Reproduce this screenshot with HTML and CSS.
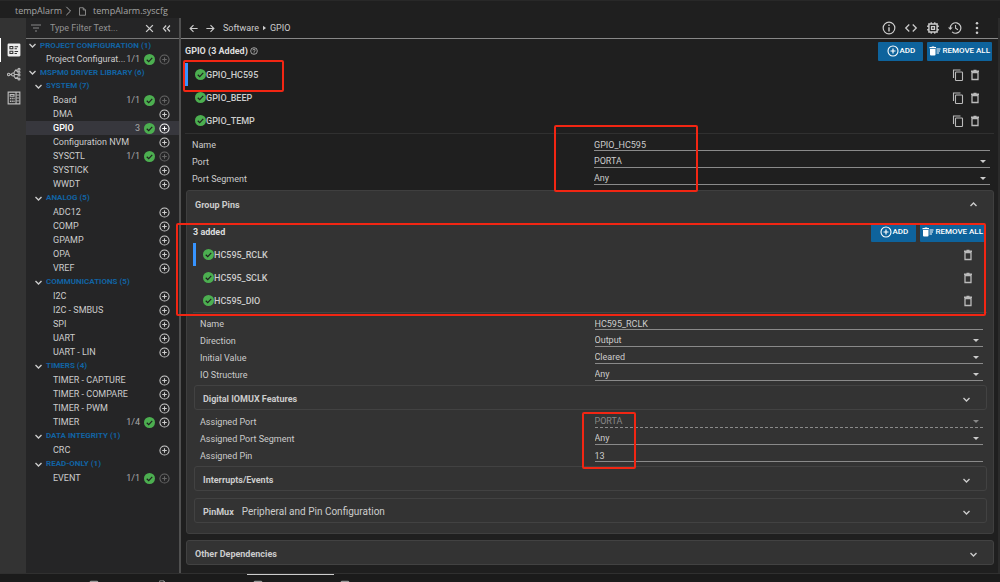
FILE: index.html
```html
<!DOCTYPE html>
<html lang="en">
<head>
<meta charset="utf-8">
<title>tempAlarm.syscfg</title>
<link rel="stylesheet" href="styles.css">
</head>
<body>
<svg class="sprite" aria-hidden="true">
  <symbol id="plus" viewBox="0 0 24 24"><circle cx="12" cy="12" r="10" fill="none" stroke="currentColor" stroke-width="2.2"/><path d="M12 7v10M7 12h10" stroke="currentColor" stroke-width="2.4"/></symbol>
  <symbol id="check" viewBox="0 0 24 24"><circle cx="12" cy="12" r="12" fill="#4caf50"/><path d="M6 12.5l4.300 4.300L18 8.500" fill="none" stroke="#202020" stroke-width="2.600"/></symbol>
  <symbol id="down" viewBox="0 0 12 12"><path d="M2 4l4 4 4-4" fill="none" stroke="currentColor" stroke-width="1.800"/></symbol>
  <symbol id="up" viewBox="0 0 12 12"><path d="M2 8l4-4 4 4" fill="none" stroke="currentColor" stroke-width="1.800"/></symbol>
  <symbol id="caret" viewBox="0 0 12 6"><path d="M0 0h12L6 6z" fill="currentColor"/></symbol>
  <symbol id="trash" viewBox="0 0 24 24"><path d="M6 7h12v14H6zM4 4.500h16M9 3h6" fill="none" stroke="currentColor" stroke-width="2.600"/></symbol>
  <symbol id="copy" viewBox="0 0 24 24"><path d="M3 18V2h14" fill="none" stroke="currentColor" stroke-width="2.200"/><rect x="7" y="6" width="14" height="17" rx="1.500" fill="none" stroke="currentColor" stroke-width="2.200"/></symbol>
  <symbol id="sweep" viewBox="0 0 24 24"><path d="M2 8h11v11q0 2-2 2H4q-2 0-2-2zM1 4h4l1-1h4l1 1h3v2.500H1zM15 7h8v2h-8zM15 11h7v2h-7zM15 15h5v2h-5z" fill="currentColor"/></symbol>
  <symbol id="file" viewBox="0 0 24 24"><path d="M4 2h10l6 6v14H4zM14 2v6h6" fill="none" stroke="currentColor" stroke-width="2"/></symbol>
  <symbol id="window" viewBox="0 0 24 24"><rect x="3" y="3" width="18" height="18" rx="2" fill="none" stroke="currentColor" stroke-width="3"/></symbol>
</svg>

<nav class="crumbs" aria-label="File path">
  <span>tempAlarm</span>
  <svg class="i10 crumb-sep" viewBox="0 0 12 12"><path d="M4 1l5 5-5 5" fill="none" stroke="currentColor" stroke-width="1.200"/></svg>
  <svg class="i9"><use href="#file"/></svg>
  <span>tempAlarm.syscfg</span>
</nav>

<div class="workspace">
  <div class="rail">
    <button class="rail-btn active" aria-label="Configuration"><svg viewBox="0 0 24 24"><rect x="1" y="1" width="22" height="22" rx="2" fill="#eee"/><path d="M5 6h5v4H5zM5 14h5v4H5z" fill="none" stroke="#333" stroke-width="1.800"/><path d="M13 6.500h6M13 10h4M13 14.500h6M13 18h4" stroke="#333" stroke-width="1.800"/></svg></button>
    <button class="rail-btn" aria-label="Graph"><svg viewBox="0 0 28 28"><path d="M4 15h8M12 15l5-9h5M12 15h10M12 15l5 8h5M17 6l5 4M17 23l5-3" fill="none" stroke="currentColor" stroke-width="2.200"/><g fill="#333" stroke="currentColor" stroke-width="2.200"><circle cx="3.500" cy="15" r="2.500"/><circle cx="12" cy="15" r="3"/><circle cx="24" cy="4.500" r="2"/><circle cx="24" cy="10.500" r="2"/><circle cx="24" cy="16" r="2"/><circle cx="24" cy="24" r="2"/></g></svg></button>
    <button class="rail-btn" aria-label="Layout"><svg viewBox="0 0 24 24"><path d="M2 2h20v20H2zM15.500 2v20M5.500 6h6.500v3H5.500z" fill="none" stroke="currentColor" stroke-width="2"/><path d="M5 13h8M5 17.500h8" stroke="currentColor" stroke-width="2.500" stroke-dasharray="2 1"/><path d="M16 7h5M16 12h5M16 17h5" stroke="currentColor" stroke-width="1.500"/></svg></button>
  </div>

  <aside class="sidebar">
    <div class="filter">
      <svg class="i12 dim" viewBox="0 0 24 24"><path d="M2 6h20M6 12h12M10 18h4" stroke="currentColor" stroke-width="2"/></svg>
      <input type="text" aria-label="Filter" placeholder="Type Filter Text...">
      <button aria-label="Clear"><svg class="i9" viewBox="0 0 12 12"><path d="M1.500 1.500l9 9M10.500 1.500l-9 9" stroke="currentColor" stroke-width="1.800"/></svg></button>
      <button aria-label="Collapse"><svg class="i9" viewBox="0 0 12 12"><path d="M5.500 2L2 6l3.500 4M10.500 2L7 6l3.500 4" fill="none" stroke="currentColor" stroke-width="1.700"/></svg></button>
    </div>
    <div class="tree">
      <h2 class="section"><svg class="i9"><use href="#down"/></svg>PROJECT CONFIGURATION (1)</h2>
      <div class="item shallow"><span class="label">Project Configurat...</span><span class="count">1/1</span><svg class="i11"><use href="#check"/></svg><button disabled aria-label="Add"><svg class="i11"><use href="#plus"/></svg></button></div>
      <h2 class="section"><svg class="i9"><use href="#down"/></svg>MSPM0 DRIVER LIBRARY (6)</h2>

      <h3 class="group"><svg class="i9"><use href="#down"/></svg>SYSTEM (7)</h3>
      <div class="item"><span class="label">Board</span><span class="count">1/1</span><svg class="i11"><use href="#check"/></svg><button disabled aria-label="Add Board"><svg class="i11"><use href="#plus"/></svg></button></div>
      <div class="item"><span class="label">DMA</span><button aria-label="Add DMA"><svg class="i11"><use href="#plus"/></svg></button></div>
      <div class="item selected"><span class="label">GPIO</span><span class="count">3</span><svg class="i11"><use href="#check"/></svg><button aria-label="Add GPIO"><svg class="i11"><use href="#plus"/></svg></button></div>
      <div class="item"><span class="label">Configuration NVM</span><button aria-label="Add Configuration NVM"><svg class="i11"><use href="#plus"/></svg></button></div>
      <div class="item"><span class="label">SYSCTL</span><span class="count">1/1</span><svg class="i11"><use href="#check"/></svg><button disabled aria-label="Add SYSCTL"><svg class="i11"><use href="#plus"/></svg></button></div>
      <div class="item"><span class="label">SYSTICK</span><button aria-label="Add SYSTICK"><svg class="i11"><use href="#plus"/></svg></button></div>
      <div class="item"><span class="label">WWDT</span><button aria-label="Add WWDT"><svg class="i11"><use href="#plus"/></svg></button></div>

      <h3 class="group"><svg class="i9"><use href="#down"/></svg>ANALOG (5)</h3>
      <div class="item"><span class="label">ADC12</span><button aria-label="Add ADC12"><svg class="i11"><use href="#plus"/></svg></button></div>
      <div class="item"><span class="label">COMP</span><button aria-label="Add COMP"><svg class="i11"><use href="#plus"/></svg></button></div>
      <div class="item"><span class="label">GPAMP</span><button aria-label="Add GPAMP"><svg class="i11"><use href="#plus"/></svg></button></div>
      <div class="item"><span class="label">OPA</span><button aria-label="Add OPA"><svg class="i11"><use href="#plus"/></svg></button></div>
      <div class="item"><span class="label">VREF</span><button aria-label="Add VREF"><svg class="i11"><use href="#plus"/></svg></button></div>

      <h3 class="group"><svg class="i9"><use href="#down"/></svg>COMMUNICATIONS (5)</h3>
      <div class="item"><span class="label">I2C</span><button aria-label="Add I2C"><svg class="i11"><use href="#plus"/></svg></button></div>
      <div class="item"><span class="label">I2C - SMBUS</span><button aria-label="Add SMBUS"><svg class="i11"><use href="#plus"/></svg></button></div>
      <div class="item"><span class="label">SPI</span><button aria-label="Add SPI"><svg class="i11"><use href="#plus"/></svg></button></div>
      <div class="item"><span class="label">UART</span><button aria-label="Add UART"><svg class="i11"><use href="#plus"/></svg></button></div>
      <div class="item"><span class="label">UART - LIN</span><button aria-label="Add LIN"><svg class="i11"><use href="#plus"/></svg></button></div>

      <h3 class="group"><svg class="i9"><use href="#down"/></svg>TIMERS (4)</h3>
      <div class="item"><span class="label">TIMER - CAPTURE</span><button aria-label="Add capture timer"><svg class="i11"><use href="#plus"/></svg></button></div>
      <div class="item"><span class="label">TIMER - COMPARE</span><button aria-label="Add compare timer"><svg class="i11"><use href="#plus"/></svg></button></div>
      <div class="item"><span class="label">TIMER - PWM</span><button aria-label="Add PWM timer"><svg class="i11"><use href="#plus"/></svg></button></div>
      <div class="item"><span class="label">TIMER</span><span class="count">1/4</span><svg class="i11"><use href="#check"/></svg><button aria-label="Add timer"><svg class="i11"><use href="#plus"/></svg></button></div>

      <h3 class="group"><svg class="i9"><use href="#down"/></svg>DATA INTEGRITY (1)</h3>
      <div class="item"><span class="label">CRC</span><button aria-label="Add CRC"><svg class="i11"><use href="#plus"/></svg></button></div>

      <h3 class="group"><svg class="i9"><use href="#down"/></svg>READ-ONLY (1)</h3>
      <div class="item"><span class="label">EVENT</span><span class="count">1/1</span><svg class="i11"><use href="#check"/></svg><button disabled aria-label="Add event"><svg class="i11"><use href="#plus"/></svg></button></div>
    </div>
  </aside>

  <main class="editor">
    <header class="toolbar">
      <button aria-label="Back"><svg class="i9" viewBox="0 0 12 12"><path d="M11.500 6H1.500M6 1.500L1.500 6 6 10.500" fill="none" stroke="currentColor" stroke-width="1.500"/></svg></button>
      <button aria-label="Forward"><svg class="i9" viewBox="0 0 12 12"><path d="M.5 6h10M6 1.500L10.500 6 6 10.500" fill="none" stroke="currentColor" stroke-width="1.500"/></svg></button>
      <nav class="path" aria-label="Location"><a href="#software">Software</a><svg viewBox="0 0 4 6"><path d="M0 0l4 3-4 3z" fill="currentColor"/></svg><a href="#gpio">GPIO</a></nav>
      <div class="tools">
        <button aria-label="Info"><svg class="i14" viewBox="0 0 24 24"><circle cx="12" cy="12" r="10" fill="none" stroke="currentColor" stroke-width="2"/><path d="M12 10.500V18M12 6v2.500" stroke="currentColor" stroke-width="2.400"/></svg></button>
        <button aria-label="Code"><svg class="i14" viewBox="0 0 24 24"><path d="M9 6l-6 6 6 6M15 6l6 6-6 6" fill="none" stroke="currentColor" stroke-width="2.200"/></svg></button>
        <button aria-label="Device"><svg class="i14" viewBox="0 0 24 24"><path d="M5 5h14v14H5z" fill="none" stroke="currentColor" stroke-width="2.500"/><path d="M9.500 9.500h5v5h-5zM9 2v3M15 2v3M9 19v3M15 19v3M2 9h3M2 15h3M19 9h3M19 15h3" fill="none" stroke="currentColor" stroke-width="2.200"/></svg></button>
        <button aria-label="History"><svg class="i14" viewBox="0 0 24 24"><path d="M4 12a9 9 0 1 1 3 6.700" fill="none" stroke="currentColor" stroke-width="2"/><path d="M0 11h8l-4 4.500z" fill="currentColor"/><path d="M13 7v5.500l4 2.500" fill="none" stroke="currentColor" stroke-width="1.800"/></svg></button>
        <button aria-label="More"><svg class="i14" viewBox="0 0 24 24"><g fill="currentColor"><circle cx="12" cy="4" r="2.200"/><circle cx="12" cy="12" r="2.200"/><circle cx="12" cy="20" r="2.200"/></g></svg></button>
      </div>
    </header>

    <div class="content">
      <section>
        <div class="list-head">
          <h1>GPIO (3 Added)</h1>
          <svg class="i8" viewBox="0 0 24 24"><circle cx="12" cy="12" r="10" fill="none" stroke="currentColor" stroke-width="2"/><path d="M8.500 10q0-3.500 3.500-3.500t3.500 3q0 2-2 3T12 15v1M12 17v2" fill="none" stroke="currentColor" stroke-width="2"/></svg>
          <div class="actions"><button class="primary add"><svg class="i12"><use href="#plus"/></svg>ADD</button><button class="primary"><svg class="i12"><use href="#sweep"/></svg>REMOVE ALL</button></div>
        </div>
        <ul class="instances">
          <li class="current"><svg class="i11"><use href="#check"/></svg><span>GPIO_HC595</span><button aria-label="Duplicate"><svg class="i12"><use href="#copy"/></svg></button><button aria-label="Remove"><svg class="i12"><use href="#trash"/></svg></button></li>
          <li><svg class="i11"><use href="#check"/></svg><span>GPIO_BEEP</span><button aria-label="Duplicate"><svg class="i12"><use href="#copy"/></svg></button><button aria-label="Remove"><svg class="i12"><use href="#trash"/></svg></button></li>
          <li><svg class="i11"><use href="#check"/></svg><span>GPIO_TEMP</span><button aria-label="Duplicate"><svg class="i12"><use href="#copy"/></svg></button><button aria-label="Remove"><svg class="i12"><use href="#trash"/></svg></button></li>
        </ul>
        <div class="fields">
          <div class="field"><label for="name">Name</label><div class="control"><input id="name" type="text" value="GPIO_HC595"></div></div>
          <div class="field"><label for="port">Port</label><div class="control"><select id="port"><option>PORTA</option></select><svg class="caret"><use href="#caret"/></svg></div></div>
          <div class="field"><label for="seg">Port Segment</label><div class="control"><select id="seg"><option>Any</option></select><svg class="caret"><use href="#caret"/></svg></div></div>
        </div>
      </section>

      <section class="panel">
        <button class="panel-head"><b>Group Pins</b><svg class="i9"><use href="#up"/></svg></button>
        <div class="panel-body">
          <div class="list-head">
            <h2>3 added</h2>
            <div class="actions"><button class="primary add"><svg class="i12"><use href="#plus"/></svg>ADD</button><button class="primary"><svg class="i12"><use href="#sweep"/></svg>REMOVE ALL</button></div>
          </div>
          <ul class="instances">
            <li class="current"><svg class="i11"><use href="#check"/></svg><span>HC595_RCLK</span><button aria-label="Remove"><svg class="i12"><use href="#trash"/></svg></button></li>
            <li><svg class="i11"><use href="#check"/></svg><span>HC595_SCLK</span><button aria-label="Remove"><svg class="i12"><use href="#trash"/></svg></button></li>
            <li><svg class="i11"><use href="#check"/></svg><span>HC595_DIO</span><button aria-label="Remove"><svg class="i12"><use href="#trash"/></svg></button></li>
          </ul>
          <div class="fields">
            <div class="field"><label for="pin-name">Name</label><div class="control"><input id="pin-name" type="text" value="HC595_RCLK"></div></div>
            <div class="field"><label for="dir">Direction</label><div class="control"><select id="dir"><option>Output</option></select><svg class="caret"><use href="#caret"/></svg></div></div>
            <div class="field"><label for="init">Initial Value</label><div class="control"><select id="init"><option>Cleared</option></select><svg class="caret"><use href="#caret"/></svg></div></div>
            <div class="field"><label for="io">IO Structure</label><div class="control"><select id="io"><option>Any</option></select><svg class="caret"><use href="#caret"/></svg></div></div>
          </div>
          <button class="card"><b>Digital IOMUX Features</b><svg class="i9"><use href="#down"/></svg></button>
          <div class="fields after-card">
            <div class="field"><label for="aport">Assigned Port</label><div class="control off"><select id="aport" disabled><option>PORTA</option></select><svg class="caret"><use href="#caret"/></svg></div></div>
            <div class="field"><label for="aseg">Assigned Port Segment</label><div class="control"><select id="aseg"><option>Any</option></select><svg class="caret"><use href="#caret"/></svg></div></div>
            <div class="field"><label for="apin">Assigned Pin</label><div class="control"><input id="apin" type="text" value="13"></div></div>
          </div>
          <button class="card"><b>Interrupts/Events</b><svg class="i9"><use href="#down"/></svg></button>
          <button class="card spaced"><b>PinMux</b><span>Peripheral and Pin Configuration</span><svg class="i9"><use href="#down"/></svg></button>
        </div>
      </section>

      <button class="card outer"><b>Other Dependencies</b><svg class="i9"><use href="#down"/></svg></button>
    </div>
  </main>
</div>

<footer class="dock">
  <span class="w78"><svg class="i10"><use href="#up"/></svg></span>
  <span class="w69"><svg class="i10"><use href="#window"/></svg></span>
  <span class="w95"><svg class="i10"><use href="#file"/></svg></span>
  <span class="w87 open"><svg class="i10"><use href="#window"/></svg></span>
  <span><svg class="i10"><use href="#window"/></svg></span>
</footer>

<div class="mark mark-instance"></div>
<div class="mark mark-port"></div>
<div class="mark mark-pins"></div>
<div class="mark mark-assigned"></div>
</body>
</html>
```
FILE: styles.css
```css
* { box-sizing: border-box; }
body {
  margin: 0;
  position: relative;
  display: flex;
  flex-direction: column;
  height: 100vh;
  overflow: hidden;
  background: #1f1f1f;
  color: #ccc;
  font: 9px/14px Roboto, "Liberation Sans", sans-serif;
}
button, input, select {
  font: inherit;
  color: inherit;
  background: none;
  border: 0;
  border-radius: 0;
  padding: 0;
  margin: 0;
  outline: 0;
  appearance: none;
}
select { opacity: 1; }
button { display: flex; align-items: center; }
h1, h2, h3 { margin: 0; font-size: 9px; }
ul { list-style: none; margin: 0; padding: 0; }
a { color: inherit; text-decoration: none; }
svg { display: block; flex: none; }
.sprite { position: absolute; width: 0; height: 0; }
.i8 { width: 8px; height: 8px; }
.i9 { width: 9px; height: 9px; }
.i10 { width: 10px; height: 10px; }
.i11 { width: 11px; height: 11px; }
.i12 { width: 12px; height: 12px; }
.i14 { width: 14px; height: 14px; }
.dim { color: #888; }

.crumbs {
  display: flex;
  align-items: center;
  height: 18px;
  padding: 3px 15px 0;
  border-top: 1px solid #282828;
  color: #a5a5a5;
  font: 9px/14px "Open Sans", "Noto Sans", sans-serif;
}
.crumb-sep { margin: 0 5px 0 1px; }
.crumbs .i9 { margin-right: 6px; }

.workspace { flex: 1; display: flex; min-height: 0; }
.rail { width: 26px; background: #333; padding-top: 20px; color: #bbb; }
.rail-btn { width: 26px; height: 24px; justify-content: center; border-left: 1px solid transparent; }
.rail-btn.active { border-left-color: #fff; }
.rail-btn svg { width: 14px; height: 14px; }

.sidebar { width: 155px; background: #252526; border-right: 2px solid #505050; }
.filter {
  display: flex;
  align-items: center;
  gap: 8px;
  height: 21px;
  padding: 0 8px 0 4px;
  border-bottom: 1px solid #777;
}
.filter input { flex: 1; min-width: 0; height: 14px; font-size: 9px; }
.filter input::placeholder { color: #929292; opacity: 1; }
.section, .group {
  display: flex;
  align-items: center;
  gap: 3px;
  color: #1163a3;
  font-size: 8px;
  font-weight: 700;
}
.section { height: 13px; padding-left: 2px; }
.group { height: 14px; padding-left: 8px; }
.section svg, .group svg { color: #ccc; }
.item { display: flex; align-items: center; gap: 4px; height: 14px; padding: 0 9px 0 27px; }
.item.shallow { padding-left: 20px; }
.item.selected { background: #37373d; color: #fff; font-weight: 500; }
.label { flex: 1; min-width: 0; white-space: nowrap; }
.count { color: #aaa; font-weight: 400; }
.item button:disabled { color: #666; }

.editor { flex: 1; min-width: 0; border-right: 2px solid #2b2b2b; }
.toolbar {
  display: flex;
  align-items: center;
  gap: 8px;
  height: 21px;
  padding: 0 14px 0 8px;
  border-bottom: 1px solid #888;
}
.path { display: flex; align-items: center; gap: 4px; }
.path svg { width: 3px; height: 6px; }
.tools { display: flex; gap: 8px; margin-left: auto; }

.content { display: flex; flex-direction: column; padding: 2px 4px 0; }
.list-head { display: flex; align-items: center; gap: 2px; height: 20px; color: #ddd; }
.actions { display: flex; gap: 4px; margin-left: auto; padding-right: 2px; }
.primary {
  justify-content: center;
  gap: 1px;
  height: 19px;
  padding: 0 2px;
  border-radius: 1px;
  background: #0e639c;
  color: #fff;
  font-size: 8px;
  font-weight: 500;
  white-space: nowrap;
}
.primary.add { width: 45px; }
.instances { padding: 2px 0 1px; border-bottom: 1px solid #303030; }
.instances li {
  display: flex;
  align-items: center;
  height: 23px;
  padding: 0 13px 0 7px;
  border-left: 3px solid transparent;
  font-weight: 500;
}
.instances li.current { border-left-color: #3794ff; }
.instances span { flex: 1; }
.instances button { margin-left: 5px; color: #bbb; }
.fields { padding: 0 4px 0 7px; }
.fields.after-card { padding-top: 1px; }
.field { display: grid; grid-template-columns: 1fr 1fr; column-gap: 6px; height: 17px; align-items: end; }
.field label { height: 12px; line-height: 12px; }
.control { display: flex; align-items: center; height: 13px; border-bottom: 1px solid #8a8a8a; }
.control input, .control select { flex: 1; min-width: 0; height: 12px; line-height: 12px; }
.control input { padding-top: 2px; line-height: 10px; }
.caret { width: 6px; height: 3px; margin-right: 4px; }
.control.off { border-bottom-style: dashed; color: #888; }

.panel { margin: 5px 0 6px 1px; border: 1px solid #3f3f3f; border-radius: 3px; background: #333; }
.panel-head { width: 100%; height: 27px; padding: 0 15px 0 8px; justify-content: space-between; color: #ccc; }
.panel-body { display: flex; flex-direction: column; padding: 4px 6px 10px; }
.panel-body .instances { padding: 1px 0 0; border-bottom-color: #434343; }
.card {
  height: 25px;
  margin: 4px 0 0 1px;
  padding: 3px 15px 0 8px;
  border: 1px solid #424242;
  border-radius: 3px;
  gap: 8px;
}
.card svg, .panel-head svg { margin-left: auto; }
.card span { font-size: 10px; }
.card.spaced { margin-top: 7px; }
.card.outer { margin: 0 0 0 1px; background: #333; }

.dock { display: flex; height: 9px; padding-left: 5px; overflow: hidden; border-top: 1px solid #303030; background: #1b1b1b; color: #999; }
.dock span { height: 18px; padding: 5px 6px; border-top: 1px solid transparent; }
.w78 { width: 78px; }
.w69 { width: 69px; }
.w95 { width: 95px; }
.w87 { width: 87px; }
.dock .open { border-top-color: #ccc; }

.mark { position: absolute; border: 2px solid #f22613; border-radius: 2px; pointer-events: none; }
.mark-instance { left: 183px; top: 60px; width: 101px; height: 32px; }
.mark-port { left: 554px; top: 125px; width: 144px; height: 67px; }
.mark-pins { left: 176px; top: 223px; width: 810px; height: 93px; }
.mark-assigned { left: 582px; top: 412px; width: 54px; height: 57px; }
```
